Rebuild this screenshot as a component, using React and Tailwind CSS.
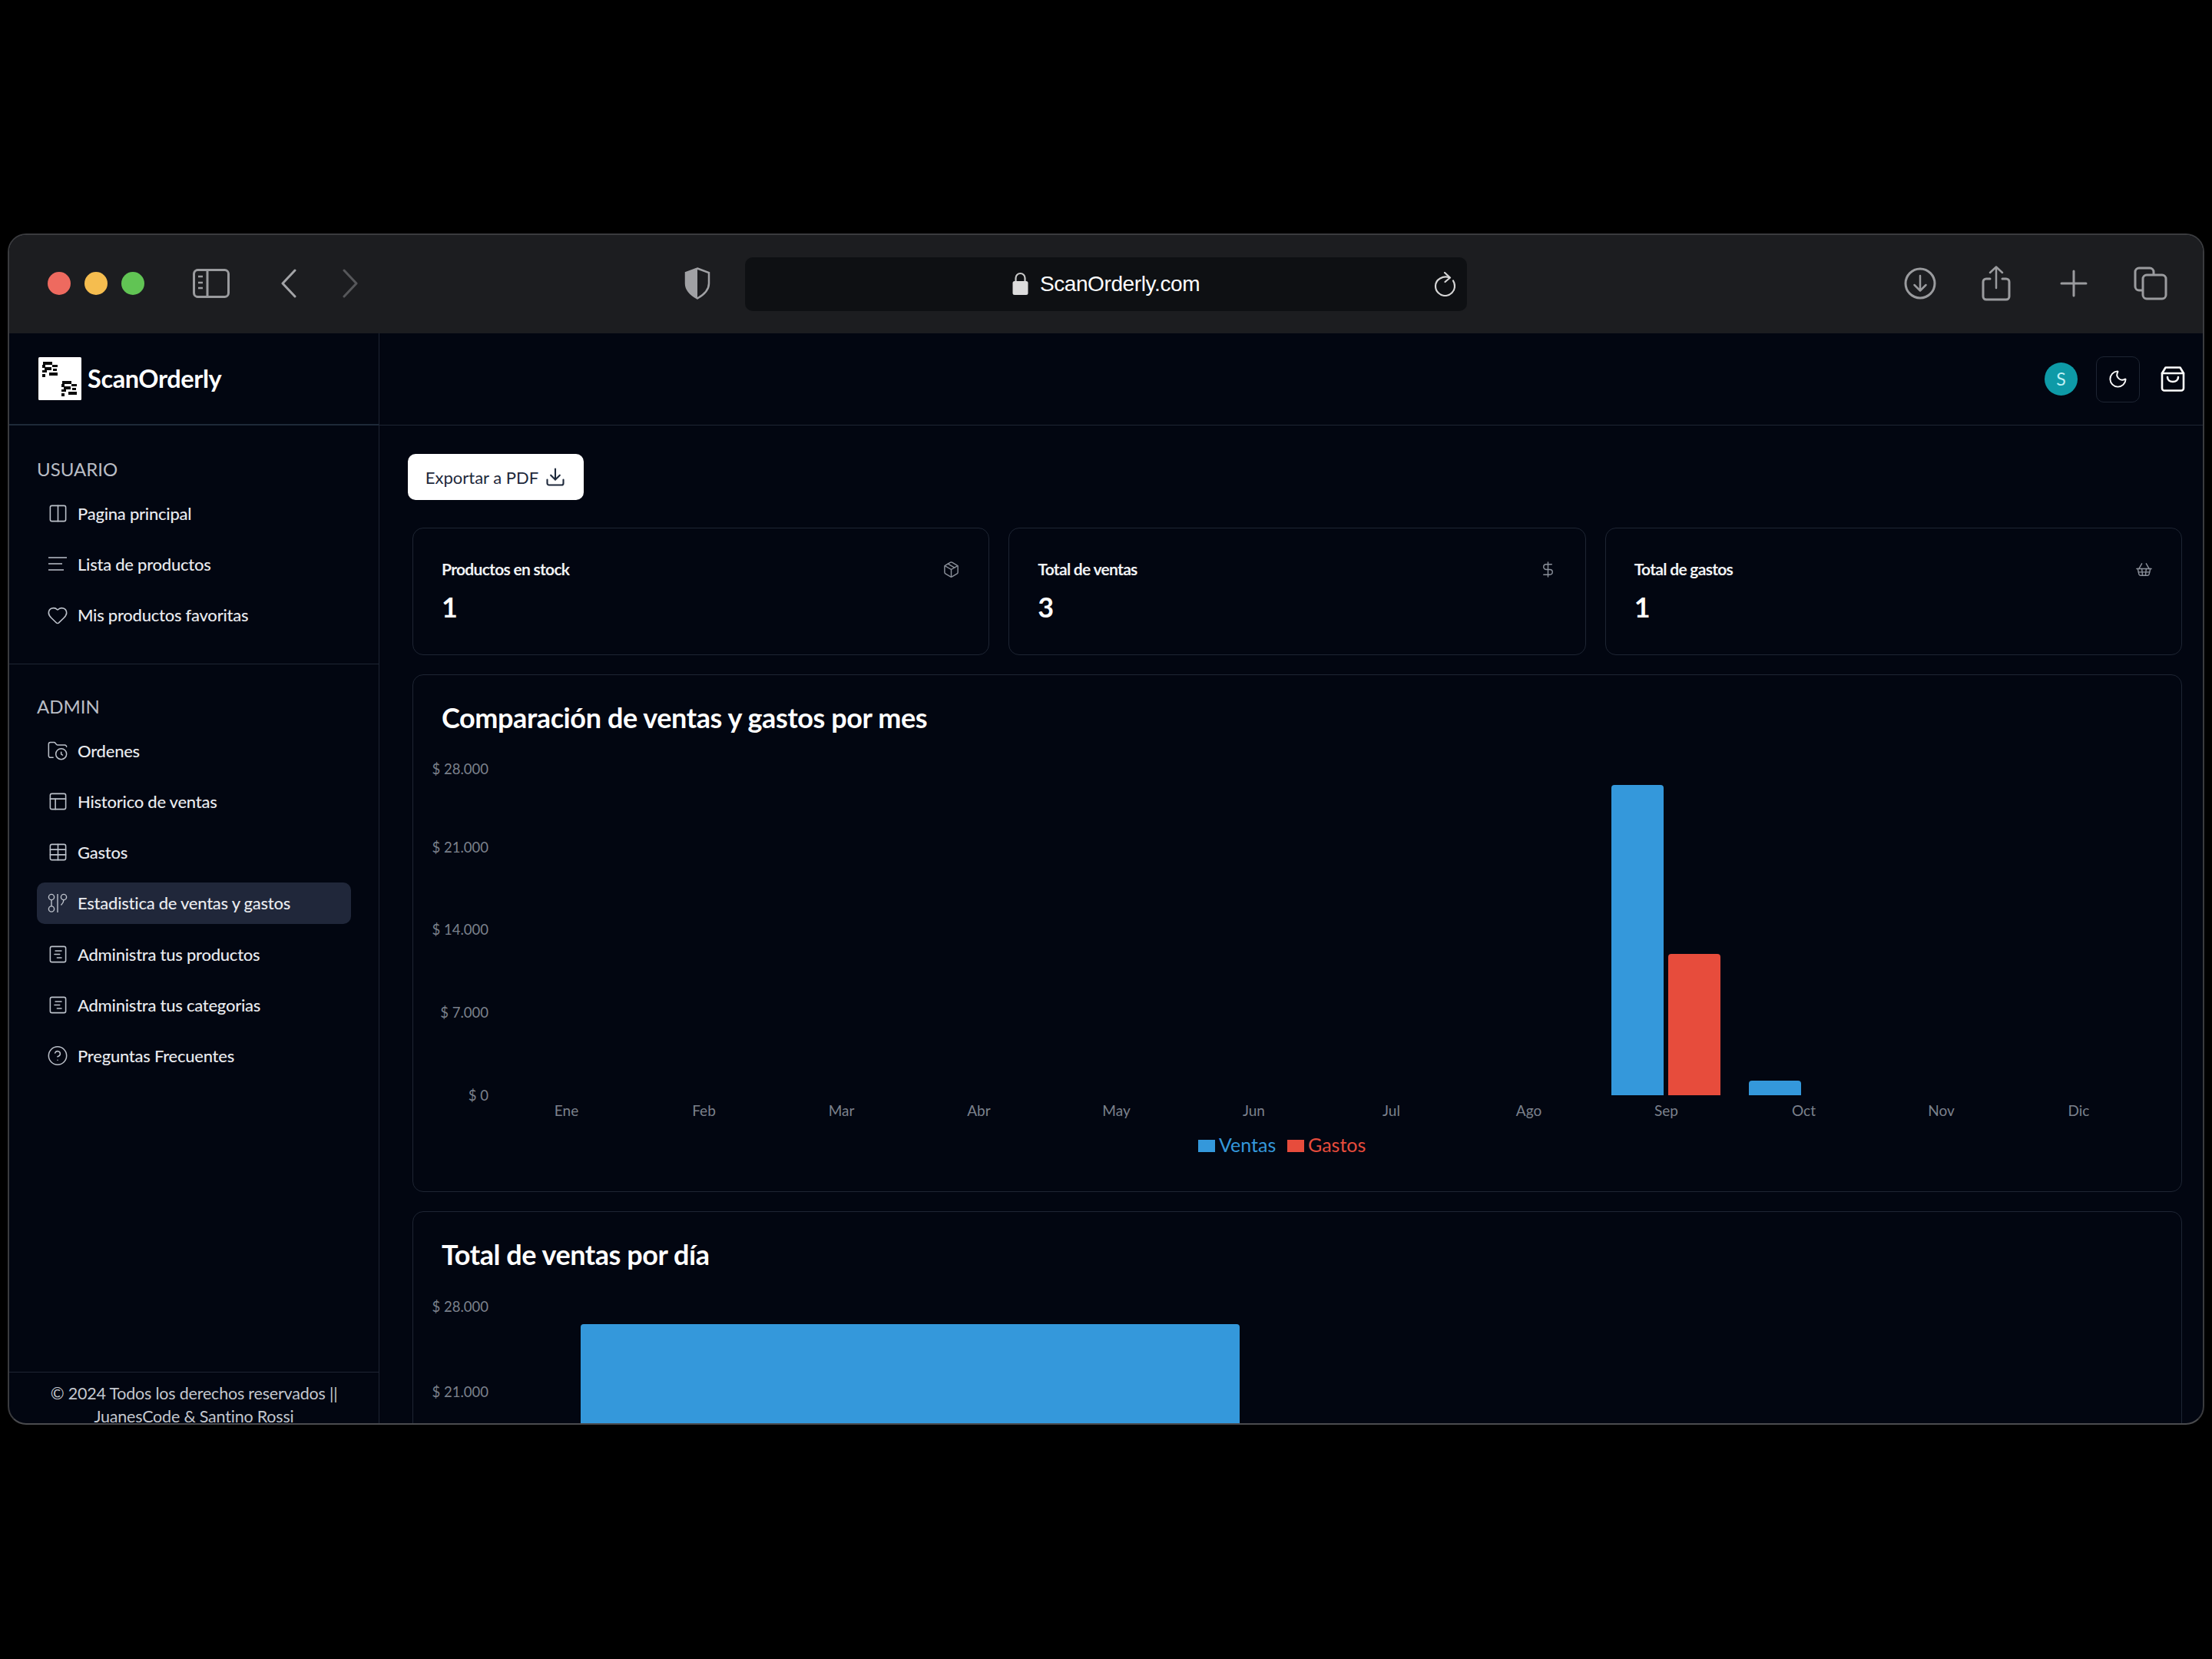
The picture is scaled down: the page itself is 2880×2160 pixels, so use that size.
import React from "react";
import {
    Columns2,
    Heart,
    FolderClock,
    PanelsTopLeft,
    Table,
    SquareChartGantt,
    CircleHelp,
    Download,
    Package,
    DollarSign,
    ShoppingBasket,
    Moon,
} from "lucide-react";

const ListIcon = ({ size = 26 }) => (
    <svg width={size} height={size} viewBox="0 0 26 26" fill="none" stroke="currentColor" strokeWidth="1.5">
        <path d="M1 5h24M1 13h18M1 21h20" />
    </svg>
);

const CompareIcon = ({ size = 26 }) => (
    <svg width={size} height={size} viewBox="0 0 26 26" fill="none" stroke="currentColor" strokeWidth="1.4">
        <circle cx="5" cy="5" r="3.6" />
        <circle cx="5" cy="20.5" r="3.6" />
        <path d="M5 8.6v8.3M13 1v24" />
        <circle cx="21" cy="5" r="3.6" />
        <path d="M21 8.6c0 3-1.5 5-3.5 7" />
    </svg>
);

const userItems = [
    { label: "Pagina principal", icon: <Columns2 size={27} strokeWidth={1.4} /> },
    { label: "Lista de productos", icon: <ListIcon /> },
    { label: "Mis productos favoritas", icon: <Heart size={28} strokeWidth={1.4} /> },
];

const adminItems = [
    { label: "Ordenes", icon: <FolderClock size={28} strokeWidth={1.3} /> },
    { label: "Historico de ventas", icon: <PanelsTopLeft size={27} strokeWidth={1.4} /> },
    { label: "Gastos", icon: <Table size={27} strokeWidth={1.4} /> },
    { label: "Estadistica de ventas y gastos", icon: <CompareIcon />, active: true },
    { label: "Administra tus productos", icon: <SquareChartGantt size={27} strokeWidth={1.4} /> },
    { label: "Administra tus categorias", icon: <SquareChartGantt size={27} strokeWidth={1.4} /> },
    { label: "Preguntas Frecuentes", icon: <CircleHelp size={29} strokeWidth={1.3} /> },
];

const stats = [
    { label: "Productos en stock", value: "1", icon: <Package size={23} strokeWidth={1.5} /> },
    { label: "Total de ventas", value: "3", icon: <DollarSign size={23} strokeWidth={1.5} /> },
    { label: "Total de gastos", value: "1", icon: <ShoppingBasket size={23} strokeWidth={1.5} /> },
];

const months = ["Ene", "Feb", "Mar", "Abr", "May", "Jun", "Jul", "Ago", "Sep", "Oct", "Nov", "Dic"];

const SidebarRow = ({ item }) => (
    <div className={`flex items-center h-[54px] mb-[12.3px] rounded-[10px] pl-[13px] ${item.active ? "bg-[#20273a]" : ""}`}>
        <span className="w-[28px] h-[28px] flex items-center justify-center text-[#bcc1ca]">{item.icon}</span>
        <span className="ml-[12px] text-[22px] font-medium text-[#e8eaee] tracking-[-0.25px]">{item.label}</span>
    </div>
);

// top-rounded bar used by both charts (coordinates are page pixels, see viewBox)
const Bar = ({ x, y, w, h, fill }) => (
    <path d={`M${x} ${y + h}V${y + 4}q0-4 4-4H${x + w - 4}q4 0 4 4V${y + h}z`} fill={fill} />
);

const YLabel = ({ y, children }) => (
    <text x="636" y={y} textAnchor="end" dominantBaseline="central" fontSize="18.5" fill="#7b818c">{children}</text>
);

const BrowserBar = () => (
    <div className="relative flex items-center h-[128px] shrink-0 bg-[#1c1d20]">
        <div className="flex items-center ml-[50px] mb-[3px] gap-[18px]">
            <span className="w-[30px] h-[30px] rounded-full bg-[#ee6a5f]" />
            <span className="w-[30px] h-[30px] rounded-full bg-[#f5bd4f]" />
            <span className="w-[30px] h-[30px] rounded-full bg-[#61c454]" />
        </div>
        <svg className="ml-[63px] mb-[3px]" width="48" height="38" viewBox="0 0 48 38" fill="none" stroke="#9a9b9e" strokeWidth="3">
            <rect x="1.5" y="1.5" width="45" height="35" rx="5" />
            <path d="M19 2v34" />
            <path d="M7 10h6M7 18h6M7 25h6" strokeWidth="2.5" />
        </svg>
        <svg className="ml-[67px] mb-[3px]" width="20" height="38" viewBox="0 0 20 38" fill="none" stroke="#a3a4a7" strokeWidth="3" strokeLinecap="round" strokeLinejoin="round">
            <path d="M18 2L2 19l16 17" />
        </svg>
        <svg className="ml-[60px] mb-[3px]" width="20" height="38" viewBox="0 0 20 38" fill="none" stroke="#56575a" strokeWidth="3" strokeLinecap="round" strokeLinejoin="round">
            <path d="M2 2l16 17L2 36" />
        </svg>
        <svg className="ml-[425px] mb-[2px]" width="34" height="42" viewBox="0 0 34 42" fill="none">
            <path d="M17 1.5L32 7v14c0 9-7 15-15 19.5C9 36 2 30 2 21V7z" fill="#1c1d20" stroke="#a0a1a4" strokeWidth="2.5" />
            <path d="M17 1.5V40.5C9 36 2 30 2 21V7z" fill="#a0a1a4" />
        </svg>
        <div className="relative flex items-center justify-center ml-[45px] w-[940px] h-[70px] rounded-[10px] bg-[#0e1013] text-white font-['Liberation_Sans',sans-serif] text-[28px]">
            <svg className="mr-[15px] mb-[3px]" width="21" height="30" viewBox="0 0 21 30" fill="none">
                <path d="M4.5 13V8a6 6 0 0 1 12 0v5" stroke="#c8c8c8" strokeWidth="2.2" />
                <rect x="0.5" y="12" width="20" height="18" rx="2.5" fill="#dcdcdc" />
            </svg>
            <span className="tracking-[-0.4px]">ScanOrderly.com</span>
            <svg className="absolute right-[15px]" width="28" height="32" viewBox="0 0 28 32" fill="none" stroke="#d5d5d5" strokeWidth="2.2" strokeLinecap="round" strokeLinejoin="round">
                <path d="M20 7.2C12 4.5 2 9.5 2 18.5a12.5 12.5 0 0 0 25 0c0-3-.8-5-2-7" />
                <path d="M14 1l7 6.5L14.500 13" />
            </svg>
        </div>
        <div className="ml-auto flex items-center mr-[46px] mb-[3px]">
            <svg width="42" height="42" viewBox="0 0 42 42" fill="none" stroke="#9a9b9e" strokeWidth="3" strokeLinecap="round" strokeLinejoin="round">
                <circle cx="21" cy="21" r="19" />
                <path d="M21 11v19M13.5 23l7.5 7.5 7.5-7.5" strokeWidth="2.5" />
            </svg>
            <svg className="ml-[59px]" width="38" height="46" viewBox="0 0 38 46" fill="none" stroke="#9a9b9e" strokeWidth="3" strokeLinecap="round" strokeLinejoin="round">
                <path d="M11 17H6a4 4 0 0 0-4 4v19a4 4 0 0 0 4 4h26a4 4 0 0 0 4-4V21a4 4 0 0 0-4-4h-5" />
                <path d="M19 29V2M11 9l8-7.5L27 9" strokeWidth="2.5" />
            </svg>
            <svg className="ml-[64px]" width="36" height="36" viewBox="0 0 36 36" fill="none" stroke="#9a9b9e" strokeWidth="3" strokeLinecap="round">
                <path d="M18 2v32M2 18h32" />
            </svg>
            <svg className="ml-[60px]" width="44" height="44" viewBox="0 0 44 44" fill="none" stroke="#9a9b9e" strokeWidth="3" strokeLinejoin="round">
                <path d="M11 31H7a5 5 0 0 1-5-5V7a5 5 0 0 1 5-5h14a5 5 0 0 1 5 5v4" />
                <rect x="12" y="11" width="30" height="31" rx="5" />
            </svg>
        </div>
    </div>
);

const qrBits = "M1 0h12v4H1zM13 4h7v3h-7zM0 4h4v4H0zM3 7h9v4H3zM0 11h6v3H0zM14 9h5v3h-5zM9 14h11v4H9zM0 16h4v4H0z";

const Logo = () => (
    <svg width="56" height="56" viewBox="0 0 56 56">
        <rect width="56" height="56" rx="1.500" fill="#ffffff" />
        <path transform="translate(5 6)" fill="#0b0b0b" d={qrBits} />
        <path transform="translate(30 31)" fill="#0b0b0b" d={qrBits} />
    </svg>
);

export default function App() {
    return (
        <div className="h-[2160px] bg-black pt-[304px] pl-[10px] overflow-hidden font-['Lato',sans-serif]">
            <div className="flex flex-col w-[2860px] h-[1551px] border-2 border-[#3a3b3e] border-b-[#4a4b4e] rounded-[24px] overflow-hidden bg-[#020611]">
                <BrowserBar />
                <div className="flex flex-1 min-h-0">
                    <aside className="flex flex-col w-[482px] shrink-0 border-r border-[#1e2533]">
                        <div className="flex items-center h-[120px] shrink-0 pl-[38px] border-b-2 border-[#1e2a38]">
                            <Logo />
                            <span className="ml-[8px] text-[32.500px] font-bold text-white tracking-[-0.4px]">ScanOrderly</span>
                        </div>
                        <div className="px-[36px] pt-[38px] h-[311px] shrink-0 border-b border-[#1e2533]">
                            <h3 className="text-[24px] leading-[38px] text-[#b9bdc5]">USUARIO</h3>
                            <div className="mt-[11px]">
                                {userItems.map((item) => (
                                    <SidebarRow key={item.label} item={item} />
                                ))}
                            </div>
                        </div>
                        <div className="flex-1 px-[36px] pt-[36px]">
                            <h3 className="text-[24px] leading-[38px] text-[#b9bdc5]">ADMIN</h3>
                            <div className="mt-[11px]">
                                {adminItems.map((item) => (
                                    <SidebarRow key={item.label} item={item} />
                                ))}
                            </div>
                        </div>
                        <div className="h-[67px] shrink-0 border-t border-[#1e2533] pt-[12px] text-center text-[21.500px] leading-[30px] text-[#c3c7ce] tracking-[-0.2px]">
                            <p>© 2024 Todos los derechos reservados ||</p>
                            <p>JuanesCode &amp; Santino Rossi</p>
                        </div>
                    </aside>
                    <main className="flex-1 min-w-0 flex flex-col overflow-hidden">
                        <header className="flex items-center justify-end h-[120px] shrink-0 pr-[23px] border-b border-[#1e2533]">
                            <span className="flex items-center justify-center w-[43px] h-[43px] rounded-full bg-[#0e9aa7] text-[#bff1f5] text-[23px]">S</span>
                            <button className="flex items-center justify-center w-[57px] h-[60px] ml-[24px] rounded-[10px] border border-[#1e2533] text-white">
                                <Moon size={27} strokeWidth={1.7} />
                            </button>
                            <svg className="ml-[27px]" width="32" height="33" viewBox="0 0 32 33" fill="none" stroke="#ffffff" strokeWidth="2.6" strokeLinejoin="round" strokeLinecap="round">
                                <path d="M6.500 1.500h19L30 9v19.500a3 3 0 0 1-3 3H5a3 3 0 0 1-3-3V9z" />
                                <path d="M2 9h28M9 14c0 8 14 8 14 0" />
                            </svg>
                        </header>
                        <div className="pl-[37px] pr-[27px] pt-[37px]">
                            <button className="flex items-center justify-center w-[229px] h-[60px] rounded-[10px] bg-white text-[#1e293b] text-[22px]">
                                Exportar a PDF
                                <Download size={28} strokeWidth={1.8} className="ml-[8px]" />
                            </button>
                            <div className="ml-[6px] mt-[36px] grid grid-cols-3 gap-[25px]">
                                {stats.map((s) => (
                                    <div key={s.label} className="h-[166px] rounded-[14px] border border-[#1e2533] px-[37px] pt-[40px]">
                                        <div className="flex items-center justify-between h-[26px]">
                                            <span className="text-[21px] font-bold text-[#f1f3f5] tracking-[-0.7px]">{s.label}</span>
                                            <span className="text-[#8b909a]">{s.icon}</span>
                                        </div>
                                        <div className="mt-[11px] text-[36px] leading-[50px] font-bold text-white">{s.value}</div>
                                    </div>
                                ))}
                            </div>
                            <section className="ml-[6px] mt-[25px] rounded-[14px] border border-[#1e2533] pt-[33px]">
                                <h2 className="pl-[37px] h-[44px] text-[36px] leading-[44px] font-bold text-white tracking-[-0.4px]">Comparación de ventas y gastos por mes</h2>
                                {/* viewBox is in page pixels so the marks can be read straight off the reference */}
                                <svg className="block mt-[4px]" width="2303" height="591" viewBox="538 960 2303 591">
                                    <YLabel y={1001}>$ 28.000</YLabel>
                                    <YLabel y={1103}>$ 21.000</YLabel>
                                    <YLabel y={1210}>$ 14.000</YLabel>
                                    <YLabel y={1318}>$ 7.000</YLabel>
                                    <YLabel y={1426}>$ 0</YLabel>
                                    <Bar x={2098} y={1022} w={68} h={404} fill="#3498db" />
                                    <Bar x={2172} y={1242} w={68} h={184} fill="#e74c3c" />
                                    <Bar x={2277} y={1407} w={68} h={19} fill="#3498db" />
                                    {months.map((m, i) => (
                                        <text key={m} x={737.5 + i * 179} y={1445} textAnchor="middle" dominantBaseline="central" fontSize="19" fill="#7b818c">{m}</text>
                                    ))}
                                    <rect x="1560" y="1484" width="22" height="16" fill="#3498db" />
                                    <text x="1587" y="1490" dominantBaseline="central" fontSize="25" fill="#3498db">Ventas</text>
                                    <rect x="1676" y="1484" width="22" height="16" fill="#e74c3c" />
                                    <text x="1703" y="1490" dominantBaseline="central" fontSize="25" fill="#e74c3c">Gastos</text>
                                </svg>
                            </section>
                            <section className="ml-[6px] mt-[25px] rounded-[14px] border border-[#1e2533] pt-[33px]">
                                <h2 className="pl-[37px] h-[44px] text-[36px] leading-[44px] font-bold text-white tracking-[-0.45px]">Total de ventas por día</h2>
                                <svg className="block mt-[4px]" width="2303" height="300" viewBox="538 1659 2303 300">
                                    <YLabel y={1701}>$ 28.000</YLabel>
                                    <YLabel y={1812}>$ 21.000</YLabel>
                                    <Bar x={756} y={1724} w={858} h={240} fill="#3498db" />
                                </svg>
                            </section>
                        </div>
                    </main>
                </div>
            </div>
        </div>
    );
}
